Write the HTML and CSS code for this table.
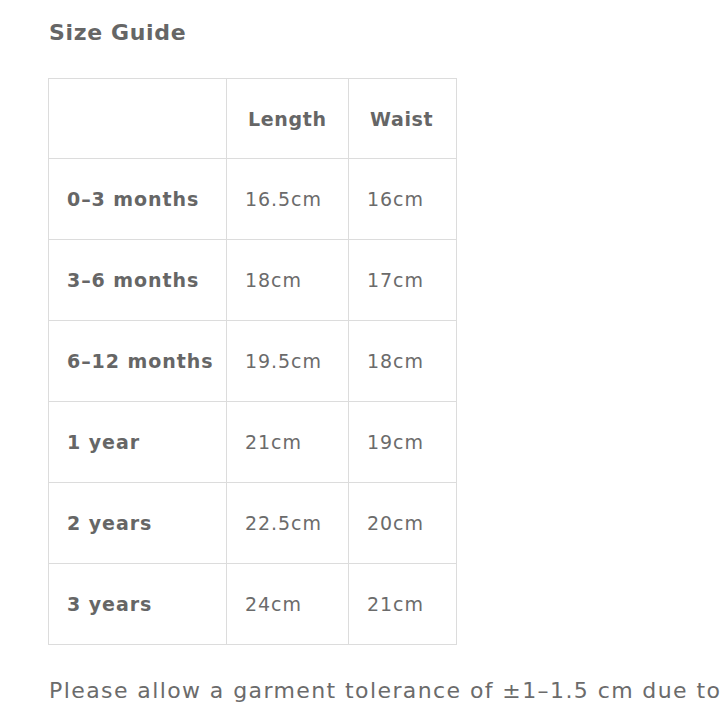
FILE: index.html
```html
<!DOCTYPE html>
<html>
<head>
<meta charset="utf-8">
<link rel="stylesheet" href="styles.css">
</head>
<body>
<div class="page">
  <h2 class="title">Size Guide</h2>
  <table class="size-table">
    <colgroup>
      <col class="c1"><col class="c2"><col class="c3">
    </colgroup>
    <thead>
      <tr><th></th><th>Length</th><th>Waist</th></tr>
    </thead>
    <tbody>
      <tr><th>0–3 months</th><td>16.5cm</td><td>16cm</td></tr>
      <tr><th>3–6 months</th><td>18cm</td><td>17cm</td></tr>
      <tr><th>6–12 months</th><td>19.5cm</td><td>18cm</td></tr>
      <tr><th>1 year</th><td>21cm</td><td>19cm</td></tr>
      <tr><th>2 years</th><td>22.5cm</td><td>20cm</td></tr>
      <tr><th>3 years</th><td>24cm</td><td>21cm</td></tr>
    </tbody>
  </table>
  <p class="note">Please allow a garment tolerance of ±1–1.5 cm due to</p>
</div>
</body>
</html>
```
FILE: styles.css
```css
html, body {
  margin: 0;
  padding: 0;
  background: #fff;
  overflow: hidden;
}
.page {
  padding: 17px 0 0 48px;
  font-family: "DejaVu Sans", "Open Sans", sans-serif;
  color: #666;
  white-space: nowrap;
}
.title {
  margin: 0 0 29px 1px;
  font-size: 22px;
  font-weight: 700;
  line-height: 32px;
  letter-spacing: 0.03em;
  color: #666;
}
.size-table {
  border-collapse: collapse;
  table-layout: fixed;
  width: 408px;
}
.c1 { width: 178px; }
.c2 { width: 122px; }
.c3 { width: 108px; }
.size-table th,
.size-table td {
  border: 1px solid #dcdcdc;
  height: 81px;
  padding: 0 0 0 18px;
  text-align: left;
  font-size: 19px;
  letter-spacing: 0.05em;
  color: #666;
  box-sizing: border-box;
}
.size-table thead th { height: 80px; padding-left: 21px; letter-spacing: 0.035em; }
.size-table th { font-weight: 700; }
.size-table td { font-weight: 400; color: #6b6b6b; }
.note {
  margin: 31px 0 0 1px;
  font-size: 22px;
  line-height: 30px;
  letter-spacing: 0.064em;
  color: #6b6b6b;
}
```
